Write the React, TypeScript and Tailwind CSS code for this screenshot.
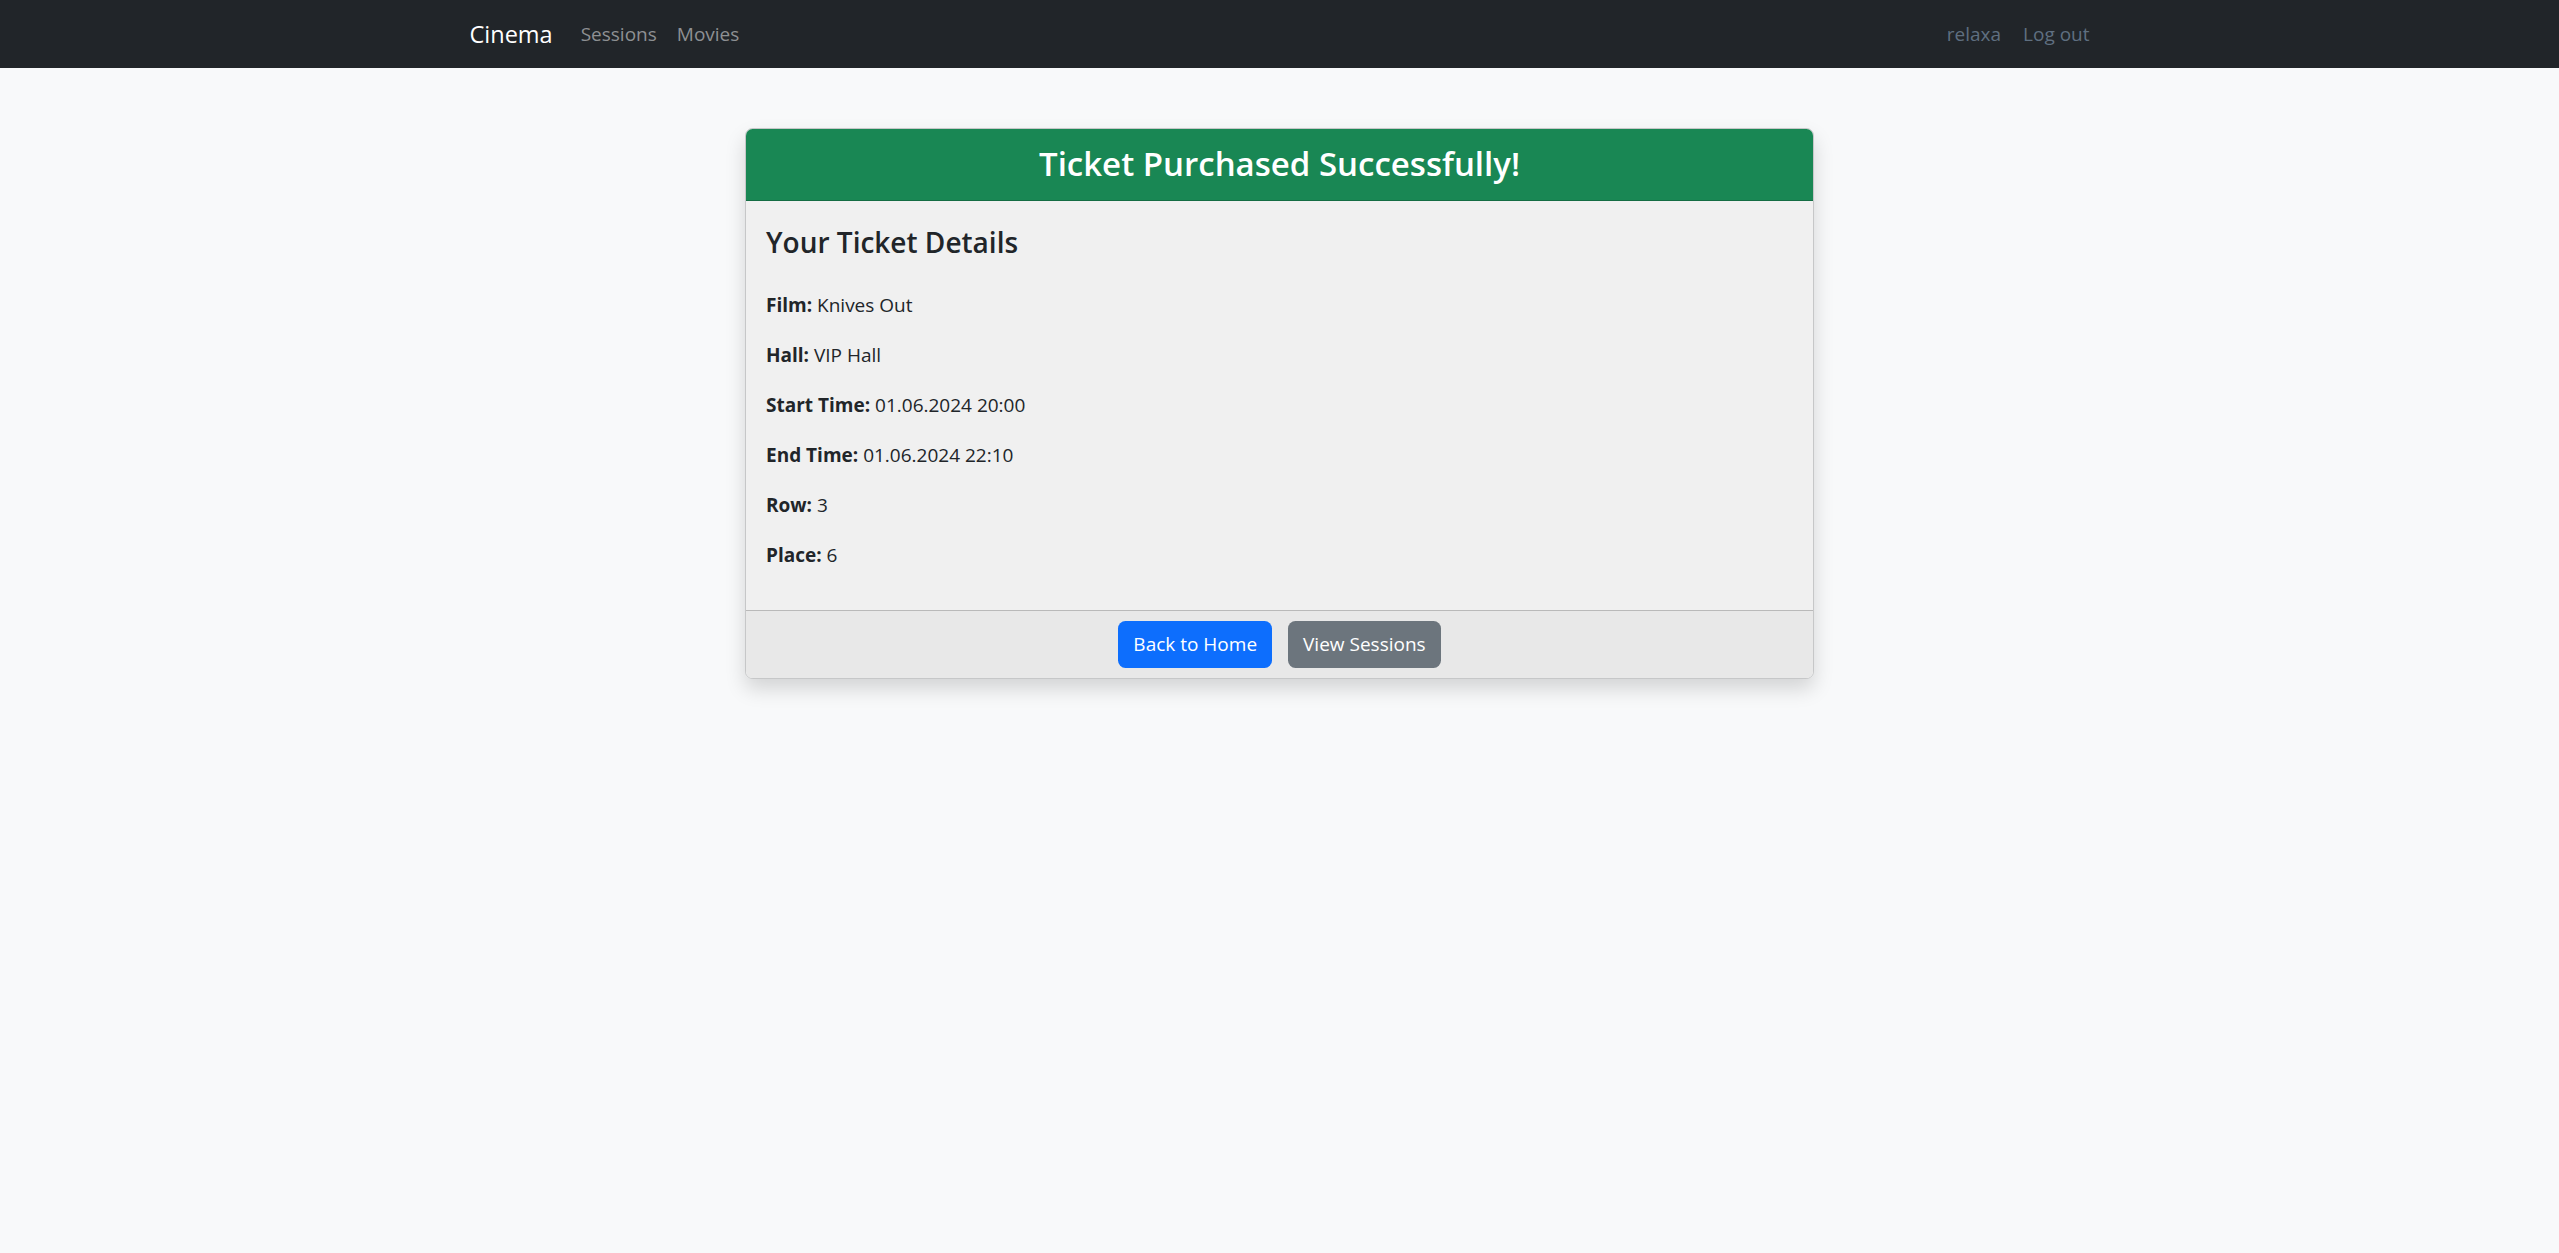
const details: [string, string][] = [
  ['Film:', 'Knives Out'],
  ['Hall:', 'VIP Hall'],
  ['Start Time:', '01.06.2024 20:00'],
  ['End Time:', '01.06.2024 22:10'],
  ['Row:', '3'],
  ['Place:', '6'],
];

function Navbar() {
  return (
    <nav className="h-[68px] bg-[#212529]">
      <div className="mx-auto flex h-full w-[1650px] items-center px-[15px]">
        <a className="mr-[18px] text-[23.5px] leading-[30px] text-white">Cinema</a>
        <div className="flex">
          <a className="px-[10px] text-[19px] leading-[30px] text-[#8e9093]">Sessions</a>
          <a className="px-[10px] text-[19px] leading-[30px] text-[#8e9093]">Movies</a>
        </div>
        <div className="ml-auto flex gap-[22px]">
          <span className="text-[19px] leading-[30px] text-[#5f6f80]">relaxa</span>
          <a className="text-[19px] leading-[30px] text-[#5f6f80]">Log out</a>
        </div>
      </div>
    </nav>
  );
}

export default function App() {
  return (
    <div className="min-h-screen bg-[#f8f9fa] font-['Segoe_UI','Open_Sans',sans-serif] text-[#212529]">
      <Navbar />
      <div className="mx-auto w-[1650px] px-[15px] pt-[60px]">
        <div className="mx-auto w-[1069px] overflow-hidden rounded-[7.5px] border border-black/20 shadow-[0_10px_20px_rgba(0,0,0,0.15)]">
          <div className="flex h-[72px] items-center justify-center border-b border-black/20 bg-[#198754]">
            <h3 className="pb-[2px] text-[33px] font-semibold leading-[42px] text-white">Ticket Purchased Successfully!</h3>
          </div>
          <div className="bg-[#f0f0f0] px-[20px] pb-[20px] pt-[23px]">
            <h4 className="mb-[30px] text-[28px] font-semibold leading-[36px]">Your Ticket Details</h4>
            {details.map(([label, value]) => (
              <p key={label} className="mb-[20px] text-[19px] leading-[30px]">
                <strong className="font-bold">{label}</strong> {value}
              </p>
            ))}
          </div>
          <div className="flex h-[68px] items-center justify-center gap-[16px] border-t border-black/20 bg-[#e8e8e8]">
            <button className="h-[47px] rounded-[7.5px] bg-[#0d6efd] px-[15px] text-[19px] text-white">Back to Home</button>
            <button className="h-[47px] rounded-[7.5px] bg-[#6c757d] px-[15px] text-[19px] text-white">View Sessions</button>
          </div>
        </div>
      </div>
    </div>
  );
}
